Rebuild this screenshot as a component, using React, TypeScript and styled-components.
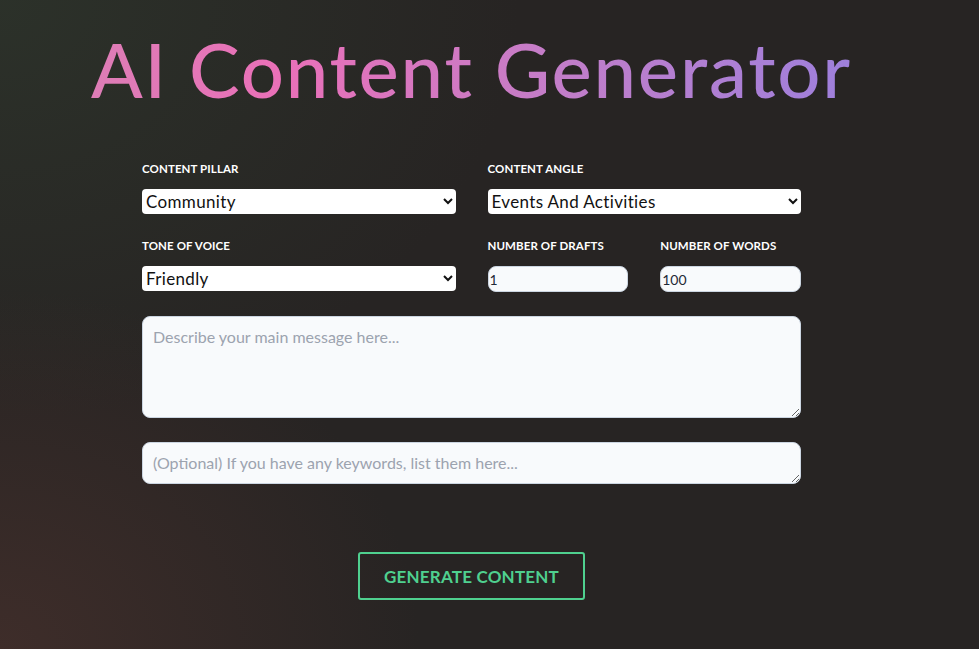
import React from 'react';
import styled, { createGlobalStyle } from 'styled-components';

const GlobalStyle = createGlobalStyle`
  * { box-sizing: border-box; }
  html, body { margin: 0; padding: 0; }
  body {
    font-family: Lato, "Open Sans", sans-serif;
    background-color: #272423;
    color: #ffffff;
  }
`;

const Page = styled.div`
  min-height: 100vh;
  background:
    radial-gradient(ellipse 420px 360px at 0% 100%, rgba(70, 48, 44, 0.75), rgba(70, 48, 44, 0) 100%),
    radial-gradient(ellipse 520px 420px at 0% 0%, rgba(44, 50, 42, 0.95), rgba(44, 50, 42, 0) 100%),
    #272423;
`;

const Container = styled.main`
  width: 943px;
  display: flex;
  flex-direction: column;
  align-items: center;
  padding-top: 27px;
`;

const Title = styled.h1`
  margin: 0;
  font-family: Lato, "Open Sans", sans-serif;
  font-weight: 500;
  font-size: 76px;
  line-height: 84px;
  letter-spacing: 1.8px;
  background: linear-gradient(90deg, #dd7db6 0%, #ea70b8 25%, #c47dc8 60%, #9e80dc 100%);
  -webkit-background-clip: text;
  background-clip: text;
  color: transparent;
`;

const Form = styled.form`
  margin-top: 50px;
  width: 659px;
  display: grid;
  grid-template-columns: repeat(4, 1fr);
  column-gap: 32px;
  row-gap: 24px;
`;

const Field = styled.div<{ $span: number }>`
  grid-column: span ${({ $span }) => $span};
  display: flex;
  flex-direction: column;
`;

const Label = styled.label`
  font-size: 11.5px;
  font-weight: 700;
  line-height: 16px;
  letter-spacing: 0.1px;
  color: #ffffff;
  margin-bottom: 12px;
`;

const Select = styled.select`
  height: 25px;
  width: 100%;
  border: none;
  border-radius: 4px;
  background-color: #ffffff;
  color: #111111;
  font-family: Lato, "Open Sans", sans-serif;
  font-size: 17px;
  letter-spacing: 0.35px;
  padding: 0;
`;

const NumberInput = styled.input`
  height: 26px;
  width: 100%;
  border: 1px solid #cbd5e1;
  border-radius: 8px;
  background-color: #f8fafc;
  color: #1f2937;
  font-family: Lato, "Open Sans", sans-serif;
  font-size: 14px;
  padding: 0 1px;
`;

const TextArea = styled.textarea<{ $height: number }>`
  display: block;
  width: 100%;
  height: ${({ $height }) => $height}px;
  border: 1px solid #cbd5e1;
  border-radius: 8px;
  background-color: #f8fafc;
  color: #1f2937;
  font-family: Lato, "Open Sans", sans-serif;
  font-size: 16px;
  line-height: 22px;
  padding: 9px 10px;

  &::placeholder {
    color: #9ca3af;
  }
`;

const Actions = styled.div`
  margin-top: 68px;
  display: flex;
  justify-content: center;
`;

const GenerateButton = styled.button`
  width: 227px;
  height: 48px;
  border: 2px solid #4fd08f;
  border-radius: 3px;
  background: transparent;
  color: #4fd08f;
  font-family: Lato, "Open Sans", sans-serif;
  font-size: 17px;
  font-weight: 700;
  letter-spacing: 0.2px;
  cursor: pointer;
`;

export default function App() {
  return (
    <>
      <GlobalStyle />
      <Page>
        <Container>
          <Title>AI Content Generator</Title>

          <Form onSubmit={(e) => e.preventDefault()}>
            <Field $span={2}>
              <Label>CONTENT PILLAR</Label>
              <Select defaultValue="community">
                <option value="community">Community</option>
                <option value="education">Education</option>
                <option value="promotion">Promotion</option>
              </Select>
            </Field>
            <Field $span={2}>
              <Label>CONTENT ANGLE</Label>
              <Select defaultValue="events">
                <option value="events">Events And Activities</option>
                <option value="stories">Customer Stories</option>
              </Select>
            </Field>

            <Field $span={2}>
              <Label>TONE OF VOICE</Label>
              <Select defaultValue="friendly">
                <option value="friendly">Friendly</option>
                <option value="professional">Professional</option>
              </Select>
            </Field>
            <Field $span={1}>
              <Label>NUMBER OF DRAFTS</Label>
              <NumberInput type="number" defaultValue={1} />
            </Field>
            <Field $span={1}>
              <Label>NUMBER OF WORDS</Label>
              <NumberInput type="number" defaultValue={100} />
            </Field>

            <Field $span={4}>
              <TextArea $height={102} placeholder="Describe your main message here..." />
            </Field>
            <Field $span={4}>
              <TextArea $height={42} placeholder="(Optional) If you have any keywords, list them here..." />
            </Field>
          </Form>

          <Actions>
            <GenerateButton type="button">GENERATE CONTENT</GenerateButton>
          </Actions>
        </Container>
      </Page>
    </>
  );
}
